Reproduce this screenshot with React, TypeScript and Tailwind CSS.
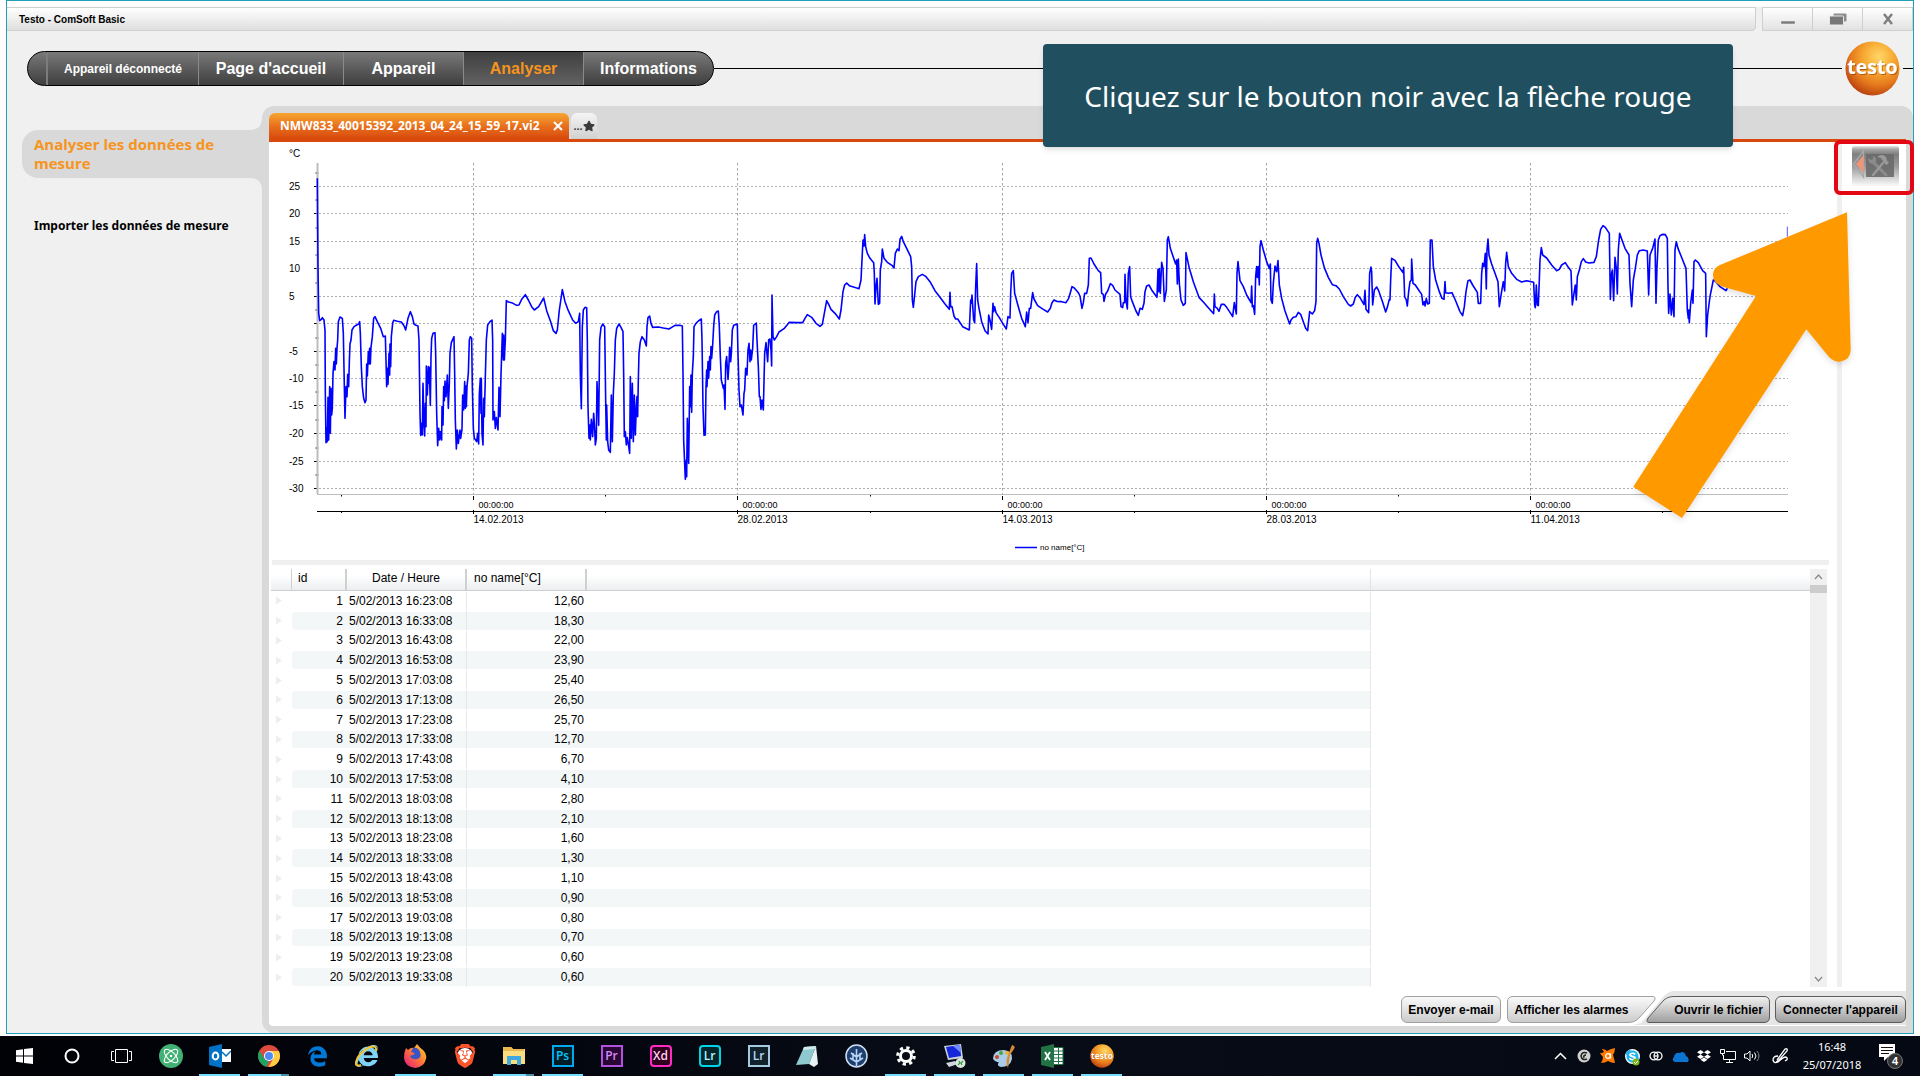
import { useState } from 'react';
import type { ReactNode } from 'react';
import { Atom } from 'lucide-react';
import { FaDropbox, FaInternetExplorer, FaSkype, FaStar } from 'react-icons/fa';
import { FaBrave, FaEdgeLegacy } from 'react-icons/fa6';

// Temperature curve, in thirds of a pixel, one chunk per part of the period
const curve = [
  {
    offset: 0,
    points:
      '172,115 174,380 176,520 179,542 184,538 187,533 192,540 195,572 196,760 198,908 200,865 202,905 204,772 206,900 209,740 211,880 213,745 215,825 217,805 219,700 222,665 225,690 227,625 229,672 231,625 233,600 235,545 240,531 247,535 250,580 253,740 255,835 258,740 261,770 263,703 266,740 268,665 270,612 273,600 276,570 282,560 290,555 296,552 299,545 301,580 304,680 307,740 311,775 315,788 318,780 320,672 322,708 325,635 327,672 329,625 331,672 333,622 337,590 341,535 345,530 352,545 362,565 370,590 376,588 378,660 380,740 383,685 384,733 387,640 389,705 390,612 392,680 394,590 398,550 401,541 412,544 424,546 432,557 437,570 444,535 451,515 457,530 462,552 468,556 474,558 477,600 480,820 482,886 485,850 487,885 489,730 492,855 494,888 496,790 498,860 499,678 502,765 505,680 507,730 508,682 511,796 513,650 515,595 519,580 525,578 527,640 530,820 533,917 536,865 539,900 541,875 545,900 546,800 549,855 551,740 553,782 555,723 558,770 562,705 565,805 568,730 570,640 574,608 582,590 584,700 586,840 589,927 592,870 595,910 600,870 602,895 606,868 608,765 611,810 614,725 616,805 618,738 619,800 621,740 625,700 628,600 631,590 635,595 637,740 640,865 643,895 650,905 653,880 656,912 658,762 661,715 663,820 664,715 666,880 669,915 671,775 673,830 676,710 679,600 683,555 690,545 696,540 698,600 699,840 703,815 706,865 709,833 714,870 717,742 720,830 723,705 727,580 730,660 731,585 733,660 736,600 739,482 745,486 755,488 770,496 777,495 785,478 796,464 805,480 815,500 823,510 836,500 851,474 860,512 872,545 880,572 888,580 892,570 898,510 907,449 915,485 925,512 938,540 947,550 955,545 959,520 961,700 964,806 967,560 970,510 975,502 980,503 982,600 984,800 987,895 989,855 991,900 994,838 998,890 1001,820 1004,865 1006,915 1009,895 1011,725 1014,790 1016,856 1019,600 1023,562 1028,552 1034,560 1037,780 1039,900 1040,795 1043,905 1046,930 1051,937 1054,765 1057,905 1060,760 1063,700 1066,600 1070,565 1077,552 1083,562 1089,575 1091,700 1093,890 1096,875 1099,915 1102,893 1105,912 1109,940 1111,710 1114,895 1117,730 1120,905 1123,765 1126,885 1129,800 1131,770 1133,830 1135,720 1137,640 1141,605 1146,590 1153,600 1159,618 1161,560 1164,533 1169,528 1173,550 1178,562 1195,561 1210,564 1227,567 1235,562 1245,556 1260,556',
  },
  {
    offset: 1200,
    points:
      '60,556 67,558 69,700 71,900 76,1018 79,960 80,1010 82,835 86,970 89,740 91,800 93,705 95,817 97,700 100,650 102,560 108,550 115,543 124,537 126,600 129,800 132,886 136,885 138,740 140,690 141,740 144,665 146,715 149,650 151,690 153,620 155,655 158,615 161,560 164,525 170,515 175,513 178,560 181,650 184,720 190,745 192,735 195,808 197,670 200,650 204,718 207,670 209,622 212,665 214,640 217,570 221,556 232,552 234,640 237,750 240,800 244,795 249,825 252,760 254,750 257,685 261,705 264,630 267,610 270,665 272,630 274,660 278,625 281,556 289,549 291,600 295,680 298,770 300,770 303,808 306,780 310,810 314,640 318,608 323,665 326,600 330,597 333,630 335,678 336,465 339,590 343,600 350,590 357,576 372,566 388,547 410,548 428,548 435,535 442,524 455,532 468,550 480,559 487,553 493,520 500,482 507,495 513,508 525,520 538,537 543,510 549,455 554,435 560,429 568,437 583,442 597,446 603,420 606,360 609,300 612,318 614,284 617,320 622,340 630,355 641,368 643,400 645,492 648,440 651,415 655,493 659,490 661,390 665,365 667,327 672,355 682,367 697,377 702,384 706,340 712,327 717,332 720,298 725,289 730,305 740,325 752,350 755,380 757,480 760,502 765,455 768,425 775,410 787,403 797,409 810,425 825,452 840,472 855,492 868,508 870,457 872,500 876,500 882,528 887,537 893,537 908,560 928,570 932,480 934,490 936,465 941,540 944,548 947,440 950,371 953,480 957,505 965,545 975,572 984,582 986,525 990,540 995,568 999,490 1001,515 1004,500 1008,518 1018,533 1030,553 1039,567 1044,530 1050,534 1052,460 1055,400 1060,392 1064,460 1075,500 1085,535 1096,560 1100,516 1104,548 1108,505 1112,505 1118,458 1122,477 1133,497 1150,508 1163,516 1171,505 1176,488 1182,480 1190,484 1205,485 1218,488 1226,475 1231,458 1236,440 1243,444 1255,458 1260,468',
  },
  {
    offset: 2400,
    points:
      '60,468 66,505 70,488 74,460 80,460 85,435 88,355 93,354 102,372 115,392 122,398 125,460 130,463 132,484 137,462 143,453 151,431 158,436 165,450 180,463 183,500 188,503 190,488 194,488 195,403 198,480 202,507 205,400 209,380 212,470 217,485 228,513 235,526 240,505 247,508 252,490 255,455 260,438 267,435 275,450 291,472 294,388 296,455 298,386 301,460 305,367 309,385 313,484 319,450 322,300 325,290 331,325 347,372 350,360 352,432 355,357 358,430 363,480 370,496 376,490 378,338 388,385 400,425 417,472 430,486 445,503 461,521 463,462 465,500 472,505 477,514 484,493 492,493 500,502 512,520 518,530 523,488 529,522 531,400 534,365 540,422 550,440 560,465 573,488 575,438 577,500 580,497 584,523 587,410 590,380 592,412 595,380 598,435 600,320 603,302 610,330 620,365 628,385 631,372 633,480 637,490 640,430 645,378 650,395 654,362 658,435 665,475 675,513 689,552 693,540 700,532 708,530 715,517 722,523 730,545 737,565 743,572 749,515 757,522 764,512 768,485 770,310 773,295 777,310 783,345 793,383 805,412 817,434 828,437 838,447 850,470 865,493 872,498 880,492 886,472 892,464 900,473 912,494 915,451 918,508 926,518 929,400 933,381 935,395 938,495 943,450 950,441 956,452 968,487 977,516 982,502 988,478 990,480 992,420 995,355 1005,361 1015,378 1029,398 1031,382 1034,470 1039,480 1042,498 1046,455 1050,425 1054,420 1055,357 1059,430 1066,435 1076,450 1085,463 1089,495 1093,485 1095,498 1099,475 1103,492 1108,490 1111,300 1116,300 1120,380 1127,420 1138,455 1146,475 1152,478 1155,425 1157,458 1165,460 1176,458 1186,480 1200,515',
  },
  {
    offset: 3540,
    points:
      '60,515 68,527 73,500 78,455 84,422 90,420 98,435 112,457 115,490 122,490 125,400 128,370 132,380 136,340 139,447 141,330 144,297 147,345 155,372 165,400 174,425 178,500 184,460 190,425 194,453 197,370 200,337 205,380 215,400 230,418 245,426 260,422 281,427 284,495 286,503 289,435 292,495 295,497 298,420 300,360 304,323 308,345 320,354 335,375 350,392 358,388 365,375 376,368 385,382 393,392 397,495 402,460 406,435 409,480 412,410 418,390 424,365 430,356 437,366 447,369 462,367 469,350 476,300 482,268 489,257 496,262 508,280 511,478 514,405 517,390 521,482 525,352 529,385 532,462 535,330 539,280 546,300 555,325 567,345 570,430 575,500 580,420 586,385 592,345 598,332 610,330 622,333 626,465 630,345 638,325 645,297 648,490 651,380 655,300 660,287 668,283 676,284 682,295 684,440 686,520 690,462 694,525 698,475 702,530 705,330 709,305 714,325 728,360 738,385 742,510 745,535 746,510 748,548 752,490 757,450 759,490 762,365 766,360 775,368 788,392 797,400 799,590 803,525 810,470 820,420 828,425 840,440 858,452 862,445',
  },
];

const yTicks = [
  { label: '25', y: 46.5 },
  { label: '20', y: 73.5 },
  { label: '15', y: 101.5 },
  { label: '10', y: 128.5 },
  { label: '5', y: 156.5 },
  { label: '', y: 183.5 },
  { label: '-5', y: 211.5 },
  { label: '-10', y: 238.5 },
  { label: '-15', y: 265.5 },
  { label: '-20', y: 293.5 },
  { label: '-25', y: 321.5 },
  { label: '-30', y: 348.5 },
];

const xTicks = [
  { label: '14.02.2013', x: 213.5 },
  { label: '28.02.2013', x: 477.5 },
  { label: '14.03.2013', x: 742.5 },
  { label: '28.03.2013', x: 1006.5 },
  { label: '11.04.2013', x: 1270.5 },
];

const minorTicks = [81.5, 345.5, 610.5, 874.5, 1138.5, 1402.5];

const rows = [
  ['5/02/2013 16:23:08', '12,60'],
  ['5/02/2013 16:33:08', '18,30'],
  ['5/02/2013 16:43:08', '22,00'],
  ['5/02/2013 16:53:08', '23,90'],
  ['5/02/2013 17:03:08', '25,40'],
  ['5/02/2013 17:13:08', '26,50'],
  ['5/02/2013 17:23:08', '25,70'],
  ['5/02/2013 17:33:08', '12,70'],
  ['5/02/2013 17:43:08', '6,70'],
  ['5/02/2013 17:53:08', '4,10'],
  ['5/02/2013 18:03:08', '2,80'],
  ['5/02/2013 18:13:08', '2,10'],
  ['5/02/2013 18:23:08', '1,60'],
  ['5/02/2013 18:33:08', '1,30'],
  ['5/02/2013 18:43:08', '1,10'],
  ['5/02/2013 18:53:08', '0,90'],
  ['5/02/2013 19:03:08', '0,80'],
  ['5/02/2013 19:13:08', '0,70'],
  ['5/02/2013 19:23:08', '0,60'],
  ['5/02/2013 19:33:08', '0,60'],
];

const navItems = [
  { label: "Page d'accueil", width: 'w-[145px]' },
  { label: 'Appareil', width: 'w-[120px]' },
  { label: 'Analyser', width: 'w-[120px]' },
  { label: 'Informations', width: 'w-[130px]' },
];

function TestoLogo({ size }: { size: number }) {
  return (
    <svg width={size} height={size} viewBox="0 0 56 56" className="shrink-0">
      <defs>
        <radialGradient id="testo" cx="0.62" cy="0.28" r="0.75">
          <stop offset="0" stopColor="#ffd76a" />
          <stop offset="0.35" stopColor="#f8ad35" />
          <stop offset="0.7" stopColor="#e67a1c" />
          <stop offset="1" stopColor="#b9410f" />
        </radialGradient>
      </defs>
      <circle cx="28" cy="28" r="27.5" fill="url(#testo)" />
      <text x="29" y="35" textAnchor="middle" fontSize="20" fontWeight="700" fontFamily="Open Sans, sans-serif" fill="#7a3a10" opacity="0.6">testo</text>
      <text x="28" y="34" textAnchor="middle" fontSize="20" fontWeight="700" fontFamily="Open Sans, sans-serif" fill="#fff">testo</text>
    </svg>
  );
}

function TitleBar() {
  const box = 'flex w-[50px] items-center justify-center border-r border-[#cfcfcf] bg-gradient-to-b from-white to-[#e2e2e2]';
  return (
    <header className="flex bg-white pt-1.5">
      <div className="flex h-6 flex-1 items-center rounded-br border-y border-r border-[#cfcfcf] bg-gradient-to-b from-white to-[#dedede] px-3">
        <h1 className="text-[10px] font-bold text-black">Testo - ComSoft Basic</h1>
      </div>
      <div className="w-1.5 bg-[#f0f0f0]" />
      <div className="flex border-y border-l border-[#cfcfcf]">
        <button aria-label="Minimize" className={box}>
          <svg width="14" height="12"><path d="M1 9.5h12" stroke="#7d7d7d" strokeWidth="2.5" strokeLinecap="round" /></svg>
        </button>
        <button aria-label="Restore" className={box}>
          <svg width="18" height="13">
            <rect x="4.500" y="0.500" width="13" height="8" rx="1" fill="#8d8d8d" />
            <rect x="0.500" y="3" width="14" height="9" rx="1" fill="#777" stroke="#e9e9e9" />
          </svg>
        </button>
        <button aria-label="Close" className={box}>
          <svg width="12" height="12"><path d="M2 1l8 10M10 1L2 11" stroke="#7d7d7d" strokeWidth="2.400" /></svg>
        </button>
      </div>
    </header>
  );
}

function MainNav() {
  const [active, setActive] = useState('Analyser');
  return (
    <div className="flex h-[75px] items-center pl-5">
      <nav className="flex h-[35px] overflow-hidden rounded-full border border-black bg-gradient-to-b from-[#7a7a7a] to-[#3f3f3f] font-bold text-white">
        <span className="w-[18px]" />
        <span className="flex w-[152px] items-center justify-center border-l-2 border-[#7c7c7c] text-xs">Appareil déconnecté</span>
        {navItems.map((item) => (
          <button
            key={item.label}
            onClick={() => setActive(item.label)}
            className={`${item.width} border-l border-[#8a8a8a] text-base ${
              active === item.label ? 'bg-gradient-to-b from-[#404040] to-[#626262] text-[#f7941d]' : ''
            }`}
          >
            {item.label}
          </button>
        ))}
      </nav>
      <div className="h-px flex-1 bg-black" />
      <div className="px-[3px]"><TestoLogo size={55} /></div>
      <div className="h-px w-2.5 bg-black" />
    </div>
  );
}

function Sidebar() {
  return (
    <aside className="w-[255px] shrink-0 pl-[15px] pt-6 font-bold">
      <div className="relative rounded-l-2xl bg-[#d9d9d9]">
        <svg width="12" height="12" className="absolute right-0 bottom-full"><path d="M12 0v12H0Q12 12 12 0z" fill="#d9d9d9" /></svg>
        <a href="#analyser" className="block h-12 px-3 pt-[5px] font-['Open_Sans',sans-serif] text-[15px] leading-[19px] text-[#f7941d]">Analyser les données de mesure</a>
        <svg width="12" height="12" className="absolute right-0 top-full"><path d="M0 0h12v12Q12 0 0 0z" fill="#d9d9d9" /></svg>
      </div>
      <a href="#importer" className="mt-9 block px-3 font-['Noto_Sans',sans-serif] text-xs leading-6 text-black">Importer les données de mesure</a>
    </aside>
  );
}

function Chart() {
  return (
    <svg viewBox="9 2 1568 418" className="block w-full" fontFamily="Liberation Sans, Arial, sans-serif">
      <text x="29" y="17" fontSize="10">°C</text>
      {yTicks.map((tick) => (
        <g key={tick.y}>
          <path d={`M59 ${tick.y}H1528`} stroke="#b0b0b0" strokeDasharray="2 2" />
          <path d={`M54 ${tick.y}h4M55.500 ${tick.y - 13.5}h3`} stroke="#000" />
          <text x="29" y={tick.y + 3.5} fontSize="10">{tick.label}</text>
        </g>
      ))}
      {xTicks.map((tick) => (
        <g key={tick.x}>
          <path d={`M${tick.x} 23V354`} stroke="#a5a5a5" strokeDasharray="2.500 2.500" />
          <path d={`M${tick.x} 356v4M${tick.x} 370v4`} stroke="#000" />
          <text x={tick.x + 5} y="368" fontSize="9">00:00:00</text>
          <text x={tick.x} y="383" fontSize="10">{tick.label}</text>
        </g>
      ))}
      {minorTicks.map((x) => (
        <path key={x} d={`M${x} 354.500v2M${x} 371v2`} stroke="#000" />
      ))}
      <path d="M57 354.500H1528" stroke="#bdbdbd" />
      <path d="M57.500 23V354" stroke="#bdbdbd" strokeWidth="2" />
      <path d="M57 371.500H1528" stroke="#000" />
      <g transform="scale(0.33333)" fill="none" stroke="#0000ff" strokeWidth="4.800" strokeLinejoin="round">
        {curve.map((part) => (
          <polyline key={part.offset} points={part.points} transform={`translate(${part.offset} 0)`} />
        ))}
        <path d="M4582 260v30" strokeWidth="2" />
      </g>
      <path d="M755 407.500h22" stroke="#0000ff" strokeWidth="1.500" />
      <text x="780" y="410" fontSize="8">no name[°C]</text>
    </svg>
  );
}

function DataTable() {
  const head = 'border-r-2 border-[#d0d0d0] pb-1 font-normal';
  return (
    <div className="mt-1 mr-2.5 ml-0.5 flex">
      <table className="h-[418px] flex-1 table-fixed border-separate border-spacing-0 text-xs leading-4 text-black">
        <colgroup>
          <col className="w-[21px]" />
          <col className="w-[55px]" />
          <col className="w-[120px]" />
          <col className="w-[120px]" />
          <col className="w-[784px]" />
          <col />
        </colgroup>
        <thead>
          <tr className="h-[22px] [&>th]:border-b [&>th]:border-b-[#cfcfcf] [&>th]:bg-gradient-to-b [&>th]:from-white [&>th]:from-30% [&>th]:to-[#eceef0]">
            <th className="border-r border-[#d0d0d0]" />
            <th className={`${head} pl-1.5 text-left`}>id</th>
            <th className={head}>Date / Heure</th>
            <th className={`${head} pl-[7px] text-left`}>no name[°C]</th>
            <th className="border-r border-[#e3e3e3]" />
            <th />
          </tr>
        </thead>
        <tbody>
          {rows.map(([date, value], i) => (
            <tr
              key={date}
              className="[&>td]:border-y [&>td]:border-y-white [&>td]:p-0 even:[&>td:nth-child(n+2):nth-child(-n+5)]:bg-[#f3f7f8]"
            >
              <td className="pl-1!">
                <svg width="8" height="9" className="block"><path d="M1 0.500L7 4.500L1 8.500z" fill="#eeeeee" /></svg>
              </td>
              <td className="rounded-l pr-1! text-right">{i + 1}</td>
              <td className="border-r border-r-[#e6e6e6] pl-0.5! whitespace-nowrap">{date}</td>
              <td className="pr-[3px]! text-right">{value}</td>
              <td className="border-r border-r-[#e6e6e6]" />
              <td />
            </tr>
          ))}
        </tbody>
      </table>
      <div className="flex w-[17px] flex-col items-center bg-[#f0f0f0]">
        <button aria-label="Scroll up" className="flex h-4 items-center">
          <svg width="9" height="6"><path d="M1 5l3.500-4L8 5" fill="none" stroke="#8a8a8a" strokeWidth="1.300" /></svg>
        </button>
        <div className="h-2 w-full bg-[#cdcdcd]" />
        <button aria-label="Scroll down" className="mt-auto flex h-4 items-center">
          <svg width="9" height="6"><path d="M1 1l3.500 4L8 1" fill="none" stroke="#8a8a8a" strokeWidth="1.300" /></svg>
        </button>
      </div>
    </div>
  );
}

function ActionBar() {
  return (
    <div className="mt-auto flex items-end justify-end pt-1 text-xs font-bold text-black">
      <button className="mb-[3px] h-[27px] w-[100px] rounded-md border border-[#a0a0a0] bg-gradient-to-b from-[#fafafa] to-[#cccccc]">Envoyer e-mail</button>
      <div className="relative ml-1.5 flex h-[35px] items-end pb-[3px]">
        <svg width="273" height="34" className="absolute top-0 right-0">
          <path d="M0 34L8 32L31 5Q36 0 42 0H273V34z" fill="#e6e6e6" />
        </svg>
        <button className="relative h-[27px] w-[149px] pr-5">
          <svg width="149" height="27" className="absolute inset-0">
            <defs>
              <linearGradient id="light" x2="0" y2="1"><stop offset="0" stopColor="#fbfbfb" /><stop offset="1" stopColor="#cbcbcb" /></linearGradient>
            </defs>
            <path d="M-6 28.500H120Q128 28.500 133 24L150 4V-3H-6z" fill="#fff" />
            <path d="M6 .5H145Q150 .5 147 5L132 22Q128 26.500 121 26.500H6Q.5 26.500 .5 21V6Q.5 .5 6 .5z" fill="url(#light)" stroke="#a0a0a0" />
          </svg>
          <span className="relative">Afficher les alarmes</span>
        </button>
        <button className="relative -ml-2.5 h-[27px] w-[124px] pl-[21px]">
          <svg width="124" height="27" className="absolute inset-0">
            <defs>
              <linearGradient id="dark" x2="0" y2="1"><stop offset="0" stopColor="#f2f2f2" /><stop offset="1" stopColor="#9e9e9e" /></linearGradient>
            </defs>
            <path d="M28 .5H118Q123.500 .5 123.500 6V21Q123.500 26.500 118 26.500H3Q-.5 26.500 2 22L17 5Q21 .5 28 .5z" fill="url(#dark)" stroke="#5c5c5c" />
          </svg>
          <span className="relative">Ouvrir le fichier</span>
        </button>
        <button className="relative ml-[5px] h-[27px] w-[131px] rounded-md border border-[#5c5c5c] bg-gradient-to-b from-[#f2f2f2] to-[#9e9e9e]">Connecter l'appareil</button>
      </div>
    </div>
  );
}

function ToolsButton() {
  return (
    <button aria-label="Outils" className="relative -ml-2 flex h-[55px] w-20 shrink-0 items-start justify-center rounded-md border-4 border-[#e30613] pt-0.5 pl-0.5">
      <svg width="47" height="41">
        <defs>
          <linearGradient id="tool" x2="0" y2="1">
            <stop offset="0" stopColor="#e5e5e5" />
            <stop offset="0.080" stopColor="#a5a5a5" />
            <stop offset="0.200" stopColor="#7f7f7f" />
            <stop offset="0.500" stopColor="#9c9c9c" />
            <stop offset="1" stopColor="#fff" />
          </linearGradient>
        </defs>
        <rect width="47" height="41" rx="2" fill="url(#tool)" />
        <rect x="14" y="8" width="28" height="23" fill="#6a6a6a" opacity="0.900" />
        <path d="M11.500 5v26L1.500 18z" fill="none" stroke="#a9a9a9" strokeWidth="1.300" />
        <path d="M11.500 9v18L4 18z" fill="#ee9478" />
        <path d="M21 16l13 13" fill="none" stroke="#8b8b8b" strokeWidth="3" strokeLinecap="round" />
        <path d="M16 12l3 2l2-1l0-3q4 1 3 6q-3 3-6 1q-2-2-2-5z" fill="#8b8b8b" />
        <path d="M31 17L21 29" stroke="#9a9a9a" strokeWidth="2.200" strokeLinecap="round" />
        <path d="M25 11q5-4 9 0l1 4l2 1l-2 3l-3-2l-3-5z" fill="#9a9a9a" />
      </svg>
    </button>
  );
}

function Workspace() {
  return (
    <main className="relative flex min-w-0 flex-1 flex-col rounded-t-xl rounded-bl-xl bg-[#d9d9d9] p-[7px]">
      <div className="flex h-[26px] gap-0.5">
        <div className="flex w-[300px] items-center justify-between rounded-t-md bg-gradient-to-b from-[#f6a62f] via-[#e8701d] to-[#d8480c] pr-1.5 pl-[11px] text-xs font-bold text-white">
          <span className="font-['Open_Sans',sans-serif]">NMW833_40015392_2013_04_24_15_59_17.vi2</span>
          <button aria-label="Fermer">
            <svg width="10" height="10" className="block"><path d="M1 1l8 8M9 1L1 9" stroke="#fff" strokeWidth="2" /></svg>
          </button>
        </div>
        <button aria-label="Favoris" className="flex w-[26px] items-center justify-center rounded-t-md bg-gradient-to-b from-[#f5f5f5] to-[#d0d0d0] text-[11px] font-bold text-[#3a3a3a]">
          <span>...</span>
          <FaStar size={12} />
        </button>
      </div>
      <div className="flex flex-1 flex-col rounded-bl border-t-[3px] border-[#d9480c] bg-white">
        <div className="flex">
          <div className="min-w-0 flex-1">
            <Chart />
            <div className="mr-2 ml-[3px] h-[5px] bg-[#efefef]" />
            <DataTable />
          </div>
          <div className="w-[5px] bg-[#efefef]" />
          <div className="-mt-0.5 w-16">
            <ToolsButton />
          </div>
        </div>
        <ActionBar />
      </div>
      <svg width="224" height="314" viewBox="1630 210 224 314" className="pointer-events-none absolute top-[104px] right-[59px] drop-shadow-md">
        <path d="M1847 212.300L1720 265Q1713 268 1713 275Q1713 283 1722 286.500L1756 296L1633.300 486.700L1682 518L1806.300 329.300L1829 357Q1834 362 1840 361.700Q1850.500 360 1850.700 350z" fill="#ff9900" />
      </svg>
    </main>
  );
}

function AdobeTile({ label, tone }: { label: string; tone: string }) {
  return <span className={`flex h-[22px] w-[22px] items-center justify-center border-2 font-['Open_Sans',sans-serif] text-xs leading-none font-semibold ${tone}`}>{label}</span>;
}

const apps: { name: string; icon: ReactNode; open?: boolean; stacked?: boolean }[] = [
  {
    name: 'Atom',
    icon: (
      <span className="flex h-6 w-6 items-center justify-center rounded-full bg-[#41b075] text-white"><Atom size={18} strokeWidth={1.5} /></span>
    ),
  },
  {
    name: 'Outlook',
    open: true,
    icon: (
      <svg width="22" height="24">
        <path d="M12 5h10v13H12z" fill="#fff" />
        <path d="M13 8l4 4l5-5" fill="none" stroke="#0072c6" strokeWidth="1.500" />
        <path d="M0 3L13 0v24L0 21z" fill="#0072c6" />
        <ellipse cx="6.500" cy="12" rx="2.800" ry="3.500" fill="none" stroke="#fff" strokeWidth="2" />
      </svg>
    ),
  },
  {
    name: 'Chrome',
    open: true,
    stacked: true,
    icon: (
      <svg width="22" height="22" viewBox="0 0 22 22">
        <circle cx="11" cy="11" r="11" fill="#dd4b3e" />
        <path d="M1.500 5.500L6.200 13.700L11 16L8.500 21.700A11 11 0 0 1 1.500 5.500z" fill="#1da362" />
        <path d="M11 6h9.800A11 11 0 0 1 10.500 22L15.300 13.500z" fill="#ffcd42" />
        <circle cx="11" cy="11" r="5" fill="#fff" />
        <circle cx="11" cy="11" r="4" fill="#4c8bf5" />
      </svg>
    ),
  },
  { name: 'Edge', icon: <FaEdgeLegacy size={21} color="#0078d7" /> },
  {
    name: 'Internet Explorer',
    icon: (
      <span className="relative">
        <FaInternetExplorer size={22} color="#7fd3f7" />
        <svg width="24" height="24" className="absolute -top-px -left-px"><path d="M21 7Q22 1 15 3Q3 9 1 18Q0 23 6 21" fill="none" stroke="#f5c531" strokeWidth="2" /></svg>
      </span>
    ),
  },
  {
    name: 'Firefox',
    open: true,
    icon: (
      <svg width="23" height="24" viewBox="0 0 23 24">
        <defs>
          <linearGradient id="fox" x1="1" x2="0" y2="1"><stop offset="0" stopColor="#ffe226" /><stop offset="0.500" stopColor="#ff7139" /><stop offset="1" stopColor="#e31587" /></linearGradient>
        </defs>
        <path d="M2 4L4 6Q7 3 10 4Q13 0 13 0Q16 4 19 6Q23 10 22 15Q20 23 11.500 24Q1 23 0 14Q0 8 2 4z" fill="url(#fox)" />
        <path d="M9 4Q14 3 16 8Q18 14 13 15Q8 16 6 12L11 10Q9 8 7 8z" fill="#3a53c5" />
      </svg>
    ),
  },
  {
    name: 'Brave',
    icon: (
      <span className="relative">
        <span className="absolute inset-x-1 inset-y-1 rounded-full bg-white" />
        <FaBrave size={24} color="#fb542b" className="relative" />
      </span>
    ),
  },
  {
    name: 'Explorer',
    open: true,
    stacked: true,
    icon: (
      <svg width="22" height="20">
        <path d="M0 1h8l2 2h12v15H0z" fill="#fbdc7e" />
        <path d="M0 1h8l2 2h11v2H0z" fill="#e9b84c" />
        <path d="M4 19v-9h14v9h-4v-5H8v5z" fill="#3da9e0" />
      </svg>
    ),
  },
  { name: 'Photoshop', open: true, icon: <AdobeTile label="Ps" tone="border-[#00a8f0] bg-[#001d26] text-[#00c8ff]" /> },
  { name: 'Premiere', icon: <AdobeTile label="Pr" tone="border-[#b054e0] bg-[#2a0634] text-[#d98cff]" /> },
  { name: 'XD', icon: <AdobeTile label="Xd" tone="rounded border-[#ff2bc2] bg-[#2e001e] text-[#ffd0f0]" /> },
  { name: 'Lightroom', icon: <AdobeTile label="Lr" tone="rounded border-[#00d5e8] bg-[#02262b] text-[#b8f4ff]" /> },
  { name: 'Lightroom Classic', icon: <AdobeTile label="Lr" tone="border-[#a5c9de] bg-[#11222d] text-[#b4d9ef]" /> },
  {
    name: 'Notepad',
    icon: (
      <svg width="23" height="23">
        <path d="M8 2l12-1l-7 18L0 20z" fill="#8fc9d0" />
        <path d="M20 1l2 18l-4 3l-5-3z" fill="#e8f3f3" />
        <path d="M8 2l12-1l-1 3L7 5z" fill="#cfeaea" />
      </svg>
    ),
  },
  {
    name: 'SourceTree',
    icon: (
      <svg width="23" height="24" viewBox="0 0 23 24">
        <ellipse cx="11.500" cy="12" rx="10.500" ry="11" fill="#1d3f6e" stroke="#cfe0f5" strokeWidth="1.500" />
        <path d="M11.500 22V5M11.500 18L5 14M11.500 18L18 14M11.500 13L6 9M11.500 13L17 9M8 15V9M15 15V9" stroke="#b9d4f7" strokeWidth="1.600" />
      </svg>
    ),
  },
  {
    name: 'Settings',
    open: true,
    icon: (
      <svg width="20" height="20" viewBox="0 0 20 20" fill="none" stroke="#fff">
        <circle cx="10" cy="10" r="5.500" strokeWidth="3" />
        <circle cx="10" cy="10" r="8.300" strokeWidth="3" strokeDasharray="3.260 3.260" />
      </svg>
    ),
  },
  {
    name: 'Remote',
    open: true,
    icon: (
      <svg width="24" height="25">
        <path d="M1 2l17-2l2 14l-15 2z" fill="#c9d2dc" />
        <path d="M3 3l14-2l1 11l-12 2z" fill="#1626d9" />
        <path d="M10 2l7-1l1 8z" fill="#6f8dff" />
        <path d="M3 19l9-2l3 3l-9 3z" fill="#cfd6dd" />
        <circle cx="17.500" cy="19" r="5" fill="#dfe6df" />
        <path d="M15 21l2-2l-1-2M20 17l-2 2l1 2" fill="none" stroke="#2f9e44" strokeWidth="1.200" />
      </svg>
    ),
  },
  {
    name: 'Paint',
    open: true,
    icon: (
      <svg width="24" height="25">
        <path d="M1 15Q1 6 12 6Q21 7 20 15Q18 23 9 23Q4 22 7 18Q4 19 1 15z" fill="#a9cde9" />
        <circle cx="5" cy="13" r="2" fill="#c8452e" />
        <circle cx="9" cy="9" r="2" fill="#52a043" />
        <circle cx="15" cy="9" r="2" fill="#e8b33a" />
        <path d="M20 1q4 1 2 4l-4 6l-2 13q-3-5 0-13z" fill="#d98a33" />
      </svg>
    ),
  },
  {
    name: 'Excel',
    open: true,
    icon: (
      <svg width="23" height="24">
        <path d="M12 3.500h10v17H12z" fill="#fff" stroke="#217346" />
        <path d="M12 7h10M12 10.500h10M12 14h10M12 17.500h10M17.500 4v16" stroke="#217346" />
        <path d="M0 3L13 0v24L0 21z" fill="#217346" />
        <path d="M4 8l5 8M9 8l-5 8" stroke="#fff" strokeWidth="1.800" />
      </svg>
    ),
  },
  { name: 'Testo', open: true, icon: <TestoLogo size={24} /> },
];

function Taskbar() {
  return (
    <footer className="flex h-10 bg-[#02040a] bg-gradient-to-r from-[#010206] via-[#080c16] to-[#050914] text-white">
      <button aria-label="Start" className="flex w-12 items-center justify-center">
        <svg width="17" height="16"><path d="M0 2.300L7 1.300V7.500H0zM8 1.100L17 0V7.500H8zM0 8.500H7V14.700L0 13.700zM8 8.500H17V16L8 14.900z" fill="#fff" /></svg>
      </button>
      <button aria-label="Cortana" className="flex w-12 items-center justify-center">
        <svg width="16" height="16"><circle cx="8" cy="8" r="6.500" fill="none" stroke="#fff" strokeWidth="2" /></svg>
      </button>
      <button aria-label="Task view" className="flex w-[50px] items-center justify-center">
        <svg width="21" height="14" fill="none" stroke="#fff"><path d="M4.500 .5h12v13h-12zM3 2.500H.5v9H3M18 2.500h2.500v9H18" /></svg>
      </button>
      {apps.map((app) => (
        <button key={app.name} aria-label={app.name} className="relative flex w-[49px] items-center justify-center">
          {app.icon}
          {app.open && (
            <span className="absolute inset-x-1 bottom-0 flex h-0.5 bg-[#76dcfb]">
              {app.stacked && <span className="ml-auto w-2 bg-[#4a8ea5]" />}
            </span>
          )}
        </button>
      ))}
      <div className="ml-auto flex items-center">
        <div className="flex items-center [&>span]:flex [&>span]:w-6 [&>span]:justify-center">
          <span><svg width="13" height="8"><path d="M1 7l5.500-5.500L12 7" fill="none" stroke="#fff" strokeWidth="1.500" /></svg></span>
          <span>
            <svg width="14" height="14"><circle cx="7" cy="7" r="6.500" fill="#d0d0d0" /><path d="M10 4Q5 2 4 7Q5 12 10 10M9 6Q6 6 7 9" fill="none" stroke="#222" strokeWidth="1.500" /></svg>
          </span>
          <span>
            <svg width="16" height="16"><path d="M2 1Q5 1 7 3Q10 1 15 0Q15 4 13 7Q14 10 15 15Q11 15 8 13Q5 15 1 15Q3 12 3 9Q1 7 0 5Q3 5 4 4z" fill="#ff7800" /><circle cx="8" cy="8" r="2.300" fill="none" stroke="#fff" strokeWidth="1.300" /><path d="M10.500 5.500v5" stroke="#fff" strokeWidth="1.300" /></svg>
          </span>
          <span className="relative">
            <FaSkype size={15} color="#1db3f2" className="rounded-full bg-white" />
            <svg width="8" height="8" className="absolute right-1 -bottom-0.5"><circle cx="4" cy="4" r="3.500" fill="#7bb518" /><path d="M2 4l1.500 1.500L6 3" fill="none" stroke="#fff" /></svg>
          </span>
          <span>
            <svg width="14" height="10" fill="none" stroke="#fff" strokeWidth="1.300"><ellipse cx="5" cy="5" rx="4" ry="3.800" /><ellipse cx="9" cy="5" rx="4" ry="3.800" /><path d="M5 5h4" /></svg>
          </span>
          <span><svg width="17" height="11"><path d="M3 11Q-1 9 2 6Q3 1 8 2Q12-1 14 5Q18 7 16 11z" fill="#0b74d1" /></svg></span>
          <span><FaDropbox size={14} /></span>
          <span>
            <svg width="16" height="14" fill="none" stroke="#fff"><path d="M3.500 6v4.500h12v-8H6M9.500 10.500v3M6 13.500h7M.5 .5h4v4h-4zM2.500 4.500v2" /></svg>
          </span>
          <span>
            <svg width="16" height="12" fill="none" stroke="#fff"><path d="M.5 4v4h2.500l3 3V1L3 4zM8 4q1.500 2 0 4M10.500 2.500q3 3.500 0 7" /><path d="M13 1q4 5 0 10" stroke="#888" /></svg>
          </span>
        </div>
        <svg width="17" height="16" fill="none" stroke="#fff" strokeWidth="1.300" className="ml-2"><path d="M5 12L13 1q3-1 2 2L7 12l-3 2M6 8Q1 8 1 12Q2 16 6 14Q11 9 14 9Q17 11 13 13" /></svg>
        <time className="ml-3 flex w-[62px] flex-col text-center font-['Noto_Sans',sans-serif] text-[11px] leading-[18px]">
          <span>16:48</span>
          <span>25/07/2018</span>
        </time>
        <button aria-label="Notifications" className="relative ml-4 mr-[17px]">
          <svg width="24" height="26">
            <path d="M0 1h16v13H9l-4 4v-4H0z" fill="#fff" />
            <path d="M2 4.500h12M2 7.500h12M2 10.500h8" stroke="#111" />
            <circle cx="16" cy="18" r="7.500" fill="#333" stroke="#777" />
            <text x="16" y="22" textAnchor="middle" fontSize="11" fontWeight="700" fill="#fff" fontFamily="Liberation Sans, sans-serif">4</text>
          </svg>
        </button>
      </div>
    </footer>
  );
}

export default function App() {
  return (
    <div className="flex min-h-screen flex-col bg-white font-['Liberation_Sans',Arial,sans-serif]">
      <div className="relative mx-1.5 mb-0.5 flex flex-1 flex-col border border-[#1f9fb8] bg-[#f0f0f0]">
        <TitleBar />
        <MainNav />
        <div className="flex flex-1">
          <Sidebar />
          <Workspace />
        </div>
        <div
          role="status"
          className="absolute top-[43px] right-[180px] flex h-[103px] w-[690px] items-center justify-center rounded bg-[#204f60] font-['Noto_Sans',sans-serif] text-[28px] text-white shadow-md"
        >
          Cliquez sur le bouton noir avec la flèche rouge
        </div>
      </div>
      <Taskbar />
    </div>
  );
}
